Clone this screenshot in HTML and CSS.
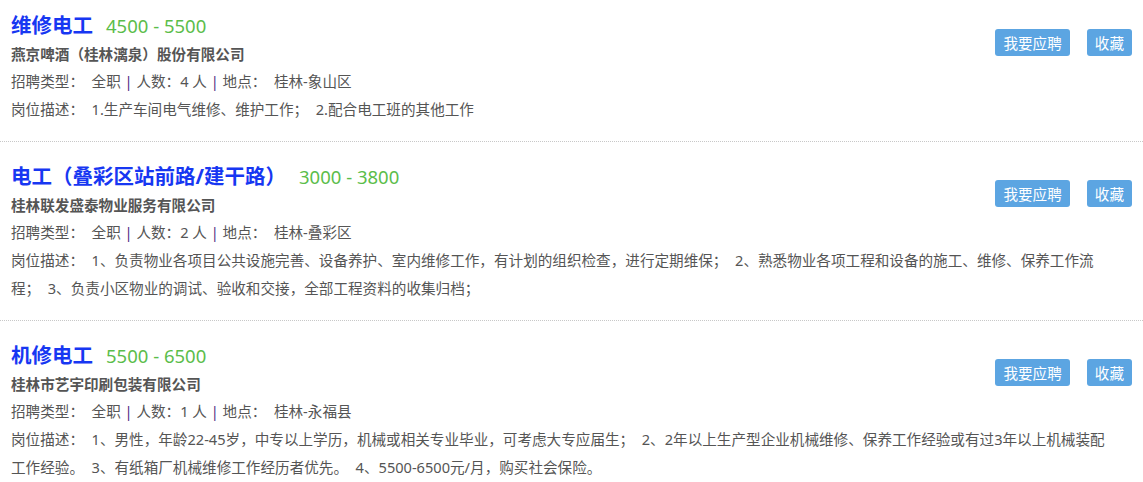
FILE: index.html
```html
<!DOCTYPE html>
<html lang="zh-CN">
<head>
    <meta charset="UTF-8">
    <meta name="viewport" content="width=device-width, initial-scale=1.0">
    <title>招聘信息</title>
    <link rel="stylesheet" href="styles.css">
</head>
<body>
    <div class="job-list">
        <div class="job">
            <div class="actions">
                <button class="btn">我要应聘</button>
                <button class="btn">收藏</button>
            </div>
            <div class="job-title"><a href="#">维修电工</a><span class="salary">4500 - 5500</span></div>
            <div class="company">燕京啤酒（桂林漓泉）股份有限公司</div>
            <div class="info">招聘类型：&nbsp; 全职 <span class="sep">|</span> 人数：4 人 <span class="sep">|</span> 地点：&nbsp; 桂林-象山区</div>
            <div class="desc">岗位描述：&nbsp; 1.生产车间电气维修、维护工作；&nbsp; 2.配合电工班的其他工作</div>
        </div>
        <div class="job">
            <div class="actions">
                <button class="btn">我要应聘</button>
                <button class="btn">收藏</button>
            </div>
            <div class="job-title"><a href="#">电工（叠彩区站前路/建干路）</a><span class="salary">3000 - 3800</span></div>
            <div class="company">桂林联发盛泰物业服务有限公司</div>
            <div class="info">招聘类型：&nbsp; 全职 <span class="sep">|</span> 人数：2 人 <span class="sep">|</span> 地点：&nbsp; 桂林-叠彩区</div>
            <div class="desc">岗位描述：&nbsp; 1、负责物业各项目公共设施完善、设备养护、室内维修工作，有计划的组织检查，进行定期维保；&nbsp; 2、熟悉物业各项工程和设备的施工、维修、保养工作流程；&nbsp; 3、负责小区物业的调试、验收和交接，全部工程资料的收集归档；</div>
        </div>
        <div class="job">
            <div class="actions">
                <button class="btn">我要应聘</button>
                <button class="btn">收藏</button>
            </div>
            <div class="job-title"><a href="#">机修电工</a><span class="salary">5500 - 6500</span></div>
            <div class="company">桂林市艺宇印刷包装有限公司</div>
            <div class="info">招聘类型：&nbsp; 全职 <span class="sep">|</span> 人数：1 人 <span class="sep">|</span> 地点：&nbsp; 桂林-永福县</div>
            <div class="desc">岗位描述：&nbsp; 1、男性，年龄22-45岁，中专以上学历，机械或相关专业毕业，可考虑大专应届生；&nbsp; 2、2年以上生产型企业机械维修、保养工作经验或有过3年以上机械装配工作经验。&nbsp; 3、有纸箱厂机械维修工作经历者优先。&nbsp; 4、5500-6500元/月，购买社会保险。</div>
        </div>
    </div>
</body>
</html>
```

FILE: styles.css
```css
body { margin: 0; background: #fff; font-family: "Noto Sans", "Noto Sans CJK SC", sans-serif; font-size: 14.6px; color: #555; text-spacing-trim: space-all; }
.job { padding: 19px 11px 18px; border-bottom: 1px dotted #c8c8c8; }
.job:first-child { padding-top: 10px; }
.job:last-child { border-bottom: none; }
.actions { float: right; display: flex; gap: 17px; margin-top: 19px; }
.btn { height: 27px; padding: 0 8px; border: none; border-radius: 3px; background: #5ca5e2; color: #fff; font-family: inherit; font-size: 14.6px; cursor: pointer; }
.job-title { display: flex; align-items: baseline; height: 30px; line-height: 30px; }
.job-title a { color: #1737f2; font-size: 20.5px; font-weight: bold; text-decoration: none; }
.salary { margin-left: 13px; color: #5bbd4a; font-size: 18.5px; }
.company { line-height: 28px; font-weight: bold; }
.info { line-height: 27px; }
.sep { color: #4e2a84; }
.desc { line-height: 28px; padding-right: 22px; }
```
